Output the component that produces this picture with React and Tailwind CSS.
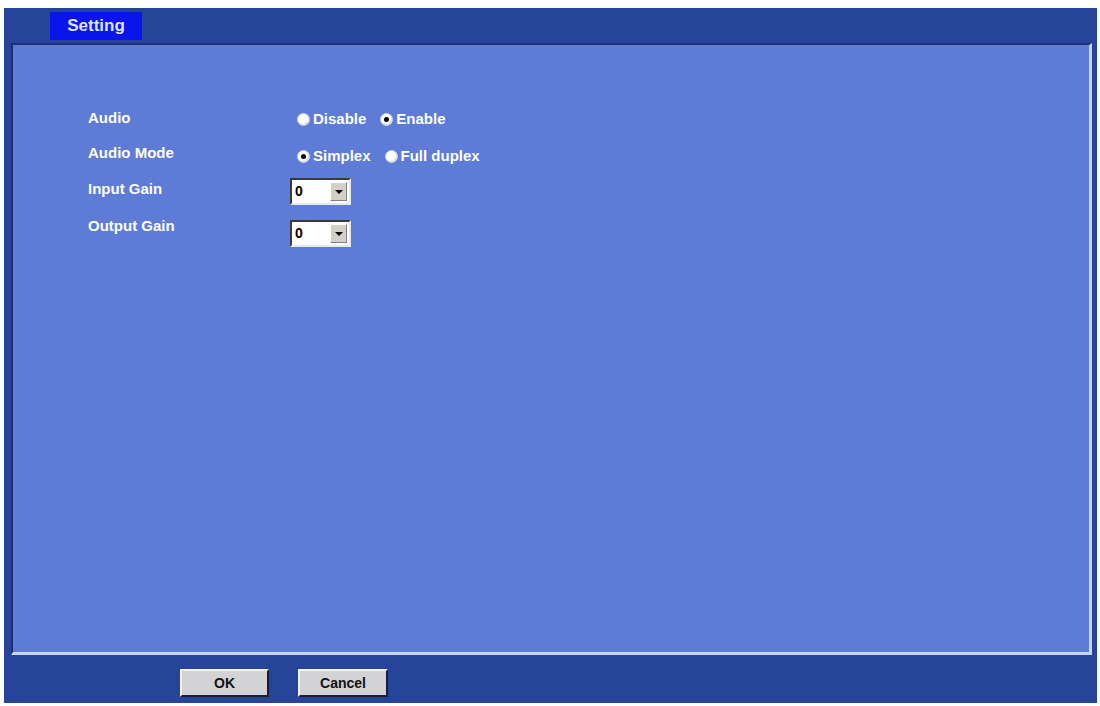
import { useState } from 'react'

const Radio = ({ checked, label, onClick }) => (
  <label className="flex items-center cursor-pointer" onClick={onClick}>
    <span className="relative w-[13px] h-[13px] rounded-full bg-white border border-[#c9d2ea] shadow-[inset_-1px_-1px_1px_#d7dbe6] flex items-center justify-center">
      {checked && <span className="w-[5px] h-[5px] rounded-full bg-black" />}
    </span>
    <span className="ml-[3px]">{label}</span>
  </label>
)

const GainSelect = ({ value, onChange }) => (
  <div className="relative w-[61px] h-[27px] bg-white border-2 border-t-[#3a3a3a] border-l-[#3a3a3a] border-r-[#e8e8e8] border-b-[#e8e8e8] flex items-center">
    <select
      value={value}
      onChange={(e) => onChange(e.target.value)}
      className="absolute inset-0 opacity-0 cursor-pointer"
    >
      {[0, 1, 2, 3, 4, 5, 6, 7, 8, 9, 10].map((n) => (
        <option key={n} value={n}>{n}</option>
      ))}
    </select>
    <span className="pl-[3px] text-black text-[14px] font-bold">{value}</span>
    <span className="ml-auto mr-[2px] w-[17px] h-[19px] bg-[#d4d0c8] border border-t-white border-l-white border-r-[#808080] border-b-[#808080] flex items-center justify-center">
      <span className="w-0 h-0 border-l-[4px] border-r-[4px] border-t-[4px] border-l-transparent border-r-transparent border-t-black" />
    </span>
  </div>
)

export default function App() {
  const [audio, setAudio] = useState('enable')
  const [mode, setMode] = useState('simplex')
  const [inputGain, setInputGain] = useState('0')
  const [outputGain, setOutputGain] = useState('0')

  return (
    <div className="w-[1100px] h-[706px] bg-white pt-[8px] pl-[4px] font-['Liberation_Sans',Arial,sans-serif]">
      <div className="w-[1093px] h-[695px] bg-[#25449a] flex flex-col">
        <div className="h-[35px] pl-[46px] pt-[4px]">
          <div className="w-[92px] h-[28px] bg-[#0b14ea] flex items-center justify-center text-[#dde4ff] text-[17px] font-bold">
            Setting
          </div>
        </div>

        <div className="ml-[7px] w-[1081px] h-[612px] bg-[#5e7bd6] border-t-2 border-l-2 border-t-[#1d2f6e] border-l-[#1d2f6e] border-r-[3px] border-b-[3px] border-r-[#c9d3f2] border-b-[#c9d3f2] text-white text-[15px] font-bold">
          <div className="pt-[56px] pl-[75px] grid grid-cols-[202px_auto] items-center">
            <div className="h-[34px] flex items-center">Audio</div>
            <div className="h-[34px] flex items-center gap-[14px] pt-[2px] pl-[7px]">
              <Radio checked={audio === 'disable'} label="Disable" onClick={() => setAudio('disable')} />
              <Radio checked={audio === 'enable'} label="Enable" onClick={() => setAudio('enable')} />
            </div>

            <div className="h-[36px] flex items-center">Audio Mode</div>
            <div className="h-[36px] flex items-center gap-[14px] pt-[6px] pl-[7px]">
              <Radio checked={mode === 'simplex'} label="Simplex" onClick={() => setMode('simplex')} />
              <Radio checked={mode === 'full'} label="Full duplex" onClick={() => setMode('full')} />
            </div>

            <div className="h-[36px] flex items-center">Input Gain</div>
            <div className="h-[36px] flex items-center pt-[5px]">
              <GainSelect value={inputGain} onChange={setInputGain} />
            </div>

            <div className="h-[38px] flex items-center">Output Gain</div>
            <div className="h-[38px] flex items-center pt-[15px]">
              <GainSelect value={outputGain} onChange={setOutputGain} />
            </div>
          </div>
        </div>

        <div className="flex pl-[176px] pt-[14px] gap-[29px]">
          <button className="w-[89px] h-[28px] bg-[#d3d3d6] border-2 border-t-[#f4f4f4] border-l-[#f4f4f4] border-r-[#1a1a40] border-b-[#1a1a40] text-[#111] text-[14px] font-bold">
            OK
          </button>
          <button className="w-[90px] h-[28px] bg-[#d3d3d6] border-2 border-t-[#f4f4f4] border-l-[#f4f4f4] border-r-[#1a1a40] border-b-[#1a1a40] text-[#111] text-[14px] font-bold">
            Cancel
          </button>
        </div>
      </div>
    </div>
  )
}
